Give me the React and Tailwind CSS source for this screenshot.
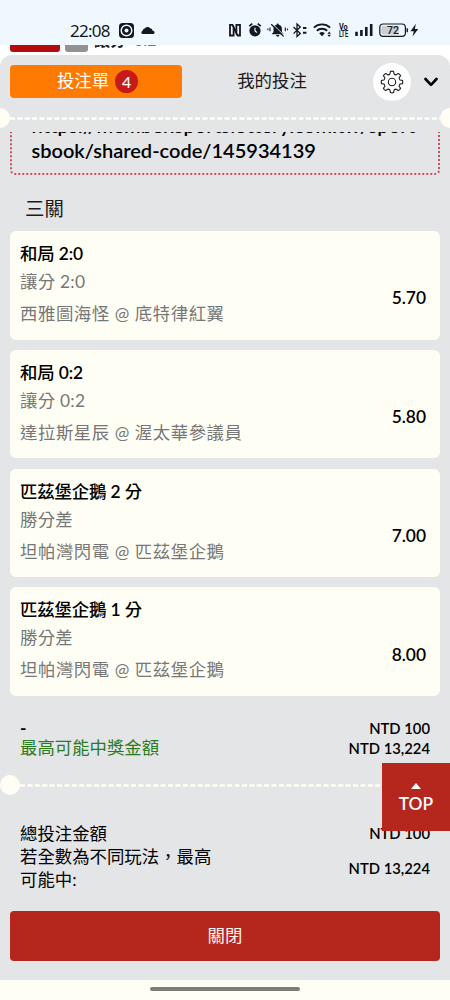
import { useState } from 'react';

const bets = [
  { team: '和局', line: '2:0', market: '讓分 2:0', match: '西雅圖海怪 @ 底特律紅翼', odds: '5.70' },
  { team: '和局', line: '0:2', market: '讓分 0:2', match: '達拉斯星辰 @ 渥太華參議員', odds: '5.80' },
  { team: '匹茲堡企鵝', line: '2', unit: '分', market: '勝分差', match: '坦帕灣閃電 @ 匹茲堡企鵝', odds: '7.00' },
  { team: '匹茲堡企鵝', line: '1', unit: '分', market: '勝分差', match: '坦帕灣閃電 @ 匹茲堡企鵝', odds: '8.00' },
];

// 8-tooth cog outline, centred on 0,0
const teeth = Array.from({ length: 8 }, (_, i) => {
  const a = (i * 45 * Math.PI) / 180;
  const pt = (r, d) => {
    const t = a + (d * Math.PI) / 180;
    return `${(r * Math.sin(t)).toFixed(2)} ${(-r * Math.cos(t)).toFixed(2)}`;
  };
  return `${i ? 'L' : 'M'}${pt(8.4, -14)} L${pt(10.6, -9)} Q${pt(11.2, 0)} ${pt(10.6, 9)} L${pt(8.4, 14)} Q${pt(7.6, 22.5)} ${pt(8.4, 31)}`;
}).join(' ');

function StatusBar() {
  return (
    <header className="relative z-10 h-[45px] shrink-0 bg-[#f0f8ff] text-[#15181d]">
      <div className="flex h-full items-center pl-[70px] pt-[15px]">
        <span className="w-[49px] font-['Noto_Sans'] text-[17px] leading-none tracking-[-0.75px]">22:08</span>
        <svg className="h-[15px] w-[15px]" viewBox="0 0 15 15">
          <rect width="15" height="15" rx="3.5" fill="currentColor" />
          <circle cx="7.5" cy="7.5" r="5.3" fill="none" stroke="#f0f8ff" strokeWidth="1.5" />
          <circle cx="7.5" cy="7.5" r="2" fill="#f0f8ff" />
        </svg>
        <svg className="ml-[7px] h-[10px] w-[14px]" viewBox="0 0 14 10">
          <path d="M1.6 9A1.5 1.5 0 0 1 1.4 6.1 3 3 0 0 1 3.6 3.6 3.4 3.4 0 0 1 9.2 3.2 3 3 0 0 1 11.6 5.8 1.7 1.7 0 0 1 12.6 9Z" fill="currentColor" />
        </svg>
        {/* right side icons */}
        <svg className="ml-[73px] h-[18px] w-[194px]" viewBox="228 21 194 18" fill="none" stroke="currentColor">
          <path d="M233 24.9h-3v10.6h3.6V28M237 35.5h3V24.9h-3.6v7.5" strokeWidth="1.8" />
          <path d="M232.6 25l4.8 10.4" strokeWidth="2" />
          <circle cx="255" cy="30.8" r="5.6" fill="currentColor" stroke="none" />
          <path d="M249.3 26.2l3-2.6M260.7 26.2l-3-2.6" strokeWidth="1.7" />
          <path d="M255 27.7v3.3l2 1.5" stroke="#f0f8ff" strokeWidth="1.2" />
          <path d="M271.5 34.3l2-2.2v-3.1a4.3 4.3 0 0 1 3.1-4.3 1.1 1.1 0 0 1 2.2 0 4.3 4.3 0 0 1 3.1 4.3v3.1l2 2.2ZM276.1 35.1h3.2a1.6 1.6 0 0 1-3.2 0Z" fill="currentColor" stroke="none" />
          <path d="M271.9 23.4l12.4 12.2" stroke="#f0f8ff" strokeWidth="1" />
          <path d="M271.2 24.2l12.4 12.2" strokeWidth="1.3" />
          <path d="M270 27.5v3.8M267.9 28.6v1.7M285.3 27.5v3.8M287.4 28.6v1.7" strokeWidth="1.1" />
          <path d="M293.5 27l6.8 6.6-3.3 3V24l3.3 3-6.8 6.6" strokeWidth="1.3" />
          <path d="M303 28h3.4M303 32.8h3.4" strokeWidth="2" />
          <path d="M313.9 27.6a11.8 11.8 0 0 1 16.2 0M316.8 30.8a7.6 7.6 0 0 1 10.4 0" strokeWidth="1.9" />
          <path d="M322 36.3l-2.8-3.1a4.2 4.2 0 0 1 5.6 0Z" fill="currentColor" stroke="none" />
          <path d="M327.5 33.8l1.7-2.2 1.7 2.2ZM327.5 34.8l1.7 2.2 1.7-2.2Z" fill="currentColor" stroke="none" />
          <g fill="currentColor" stroke="none" fontFamily="Roboto, sans-serif" fontWeight="700" fontSize="8.6">
            <text x="338.9" y="29.6" textLength="8.8" lengthAdjust="spacingAndGlyphs">Vo</text>
            <text x="338.9" y="36.6" textLength="9.2" lengthAdjust="spacingAndGlyphs">LTE</text>
          </g>
          <path d="M356.5 36v-4.2M361.4 36v-6M366.3 36v-9M371.2 36V24" strokeWidth="2.6" />
          <rect x="379.8" y="24" width="25.6" height="12.4" rx="3.4" strokeWidth="1.2" />
          <path d="M383 25.8h15.8v8.8H383a1.6 1.6 0 0 1-1.6-1.6v-5.6a1.6 1.6 0 0 1 1.6-1.6Z" fill="#c9ced5" stroke="none" />
          <path d="M407.2 28.3v4" strokeWidth="1.4" />
          <text x="387" y="34.1" fontFamily="Roboto, sans-serif" fontWeight="500" fontSize="10.5" fill="currentColor" stroke="none">72</text>
          <path d="M415.8 23.8l-5.3 7.4h3.3l-1.2 5.4 5.6-7.6h-3.3Z" fill="currentColor" stroke="none" />
        </svg>
      </div>
    </header>
  );
}

// piece of the page that shows above the bet slip
function PageBehind() {
  return (
    <div className="flex h-[10px] shrink-0 items-end overflow-hidden bg-white px-[10px] pb-[3px] text-white">
      <span className="h-5 w-[50px] shrink-0 rounded-[3px] bg-[#b70a0c] text-center text-[13px] leading-[14px] font-bold">LIVE</span>
      <span className="ml-[5px] h-5 w-[23px] shrink-0 rounded-[3px] bg-[#929292]" />
      <span className="ml-[6px] h-[20px] text-[16px] leading-[16px] font-bold text-[#1d1d1d]">讓分 <span className="ml-1 font-normal text-[#777]">0:2</span></span>
    </div>
  );
}

function Perforation({ children, className }) {
  return (
    <div className={`flex h-5 shrink-0 items-center ${className}`}>
      <i className="h-5 w-5 shrink-0 rounded-full bg-[#fffef4]" />
      <svg className="h-[3px] min-w-0 flex-1">
        <line x1="0" y1="1.5" x2="100%" y2="1.5" stroke="#fffef4" strokeWidth="2.6" strokeDasharray="5 2.4" />
      </svg>
      {children}
    </div>
  );
}

function BetCard({ bet }) {
  return (
    <li className="flex h-[108.5px] items-center justify-between rounded-[6px] bg-[#fffef4] pr-[14px] pl-[10px]">
      <div className="flex h-full flex-col pt-[9px]">
        <p className="h-[27px] text-[17.4px] leading-[27px] font-medium tracking-[-0.15px] text-black">
          {bet.team} <span className="font-semibold">{bet.line}</span> {bet.unit}
        </p>
        <p className="h-[29px] text-[17.4px] leading-[29px] tracking-[0.25px] text-[#777]">{bet.market}</p>
        <p className="h-[35px] text-[17.4px] leading-[36px] tracking-[0.55px] text-[#777]">{bet.match}</p>
      </div>
      <span className="mt-[26px] text-[17.4px] font-semibold text-black">{bet.odds}</span>
    </li>
  );
}

export default function App() {
  const [tab, setTab] = useState('slip');

  return (
    <div className="relative flex h-[1000px] w-[450px] flex-col overflow-hidden bg-white font-[Lato,'Noto_Sans_CJK_TC',sans-serif]">
      <StatusBar />
      <PageBehind />

      <main className="flex h-[925px] shrink-0 flex-col overflow-hidden rounded-t-[12px] bg-[#e4e5e7]">
        <div className="flex h-[53px] shrink-0 items-center px-[10px]">
          <button onClick={() => setTab('slip')} className="flex h-[33px] w-[172px] items-center justify-center gap-[6px] rounded-[4px] bg-[#ff7a00] pl-[3px] text-[17.4px] text-white">
            投注單
            <span className="flex h-[23px] w-[23px] items-center justify-center rounded-full bg-[#c61a17] text-[16px] leading-none font-medium">4</span>
          </button>
          <button onClick={() => setTab('mine')} aria-selected={tab === 'mine'} className="w-[180px] text-[17.4px] text-[#1a1a1a]">我的投注</button>
          <button className="ml-[11px] flex h-[38px] w-[38px] items-center justify-center rounded-full bg-white">
            <svg className="h-6 w-6" viewBox="-12 -12 24 24" fill="none" stroke="#1c1c1c" strokeWidth="1.1" strokeLinejoin="round">
              <path d={`${teeth} Z`} />
              <circle r="3.7" />
            </svg>
          </button>
          <svg className="ml-[13px] h-[10px] w-[14px]" viewBox="0 0 14 10" fill="none" stroke="#000" strokeWidth="2.6" strokeLinecap="round" strokeLinejoin="round">
            <path d="M1.5 2L7 7.8 12.5 2" />
          </svg>
        </div>

        <Perforation className="-mx-[10px]">
          <i className="h-5 w-5 shrink-0 rounded-full bg-[#fffef4]" />
        </Perforation>

        <div className="mt-1 flex min-h-0 flex-1 flex-col overflow-hidden px-[10px]">
          <div className="-mt-[24px] h-[67px] shrink-0 rounded-[5px] border-2 border-dotted border-[#c8505f] pt-[3px] pl-[19.5px] text-[20px] leading-[25px] font-semibold text-black">
            <p className="tracking-[0.13px]">https://member.sportslottery.com.tw/sport</p>
            <p>sbook/shared-code/145934139</p>
          </div>

          <h2 className="mt-5 h-[28px] pl-[15px] text-[19.4px] leading-[27px] text-[#1a1a1a]">三關</h2>

          <ul className="mt-2 flex flex-col gap-[10.3px]">
            {bets.map((bet) => <BetCard key={bet.team + bet.line} bet={bet} />)}
          </ul>

          <dl className="mt-[22px] grid h-[40px] grid-cols-[1fr_auto] px-[10px] leading-[20px] text-black">
            <dt className="text-[17.4px] font-bold">-</dt>
            <dd className="text-right text-[14.8px] font-semibold">NTD 100</dd>
            <dt className="text-[17.4px] text-[#2d7a1f]">最高可能中獎金額</dt>
            <dd className="text-right text-[14.8px] font-semibold">NTD 13,224</dd>
          </dl>

          <Perforation className="-mx-[10px] mt-[17.5px]" />

          <dl className="mt-[27px] grid grid-cols-[200px_1fr] items-center px-[10px] text-[17.4px] leading-[23px] text-black">
            <dt>總投注金額</dt>
            <dd className="text-right text-[14.8px] font-semibold">NTD 100</dd>
            <dt>若全數為不同玩法，最高可能中:</dt>
            <dd className="text-right text-[14.8px] font-semibold">NTD 13,224</dd>
          </dl>

          <button className="mt-[19.5px] h-[50px] shrink-0 rounded-[4px] bg-[#b5271d] text-[17.4px] text-[#fff3ee]">關閉</button>
        </div>
      </main>

      <footer className="flex h-5 shrink-0 justify-center bg-[#fffef4] pt-[7px]">
        <span className="h-1 w-[150px] rounded-full bg-[#7e7c76]" />
      </footer>

      <button className="absolute top-[763px] right-0 flex h-[68px] w-[68px] flex-col items-center bg-[#b5271d] pt-5 text-[17.4px] leading-none font-semibold text-white">
        <svg className="h-[6px] w-[10px]" viewBox="0 0 10 6"><path d="M0 6l5-6 5 6Z" fill="currentColor" /></svg>
        <span className="mt-[6px]">TOP</span>
      </button>
    </div>
  );
}
